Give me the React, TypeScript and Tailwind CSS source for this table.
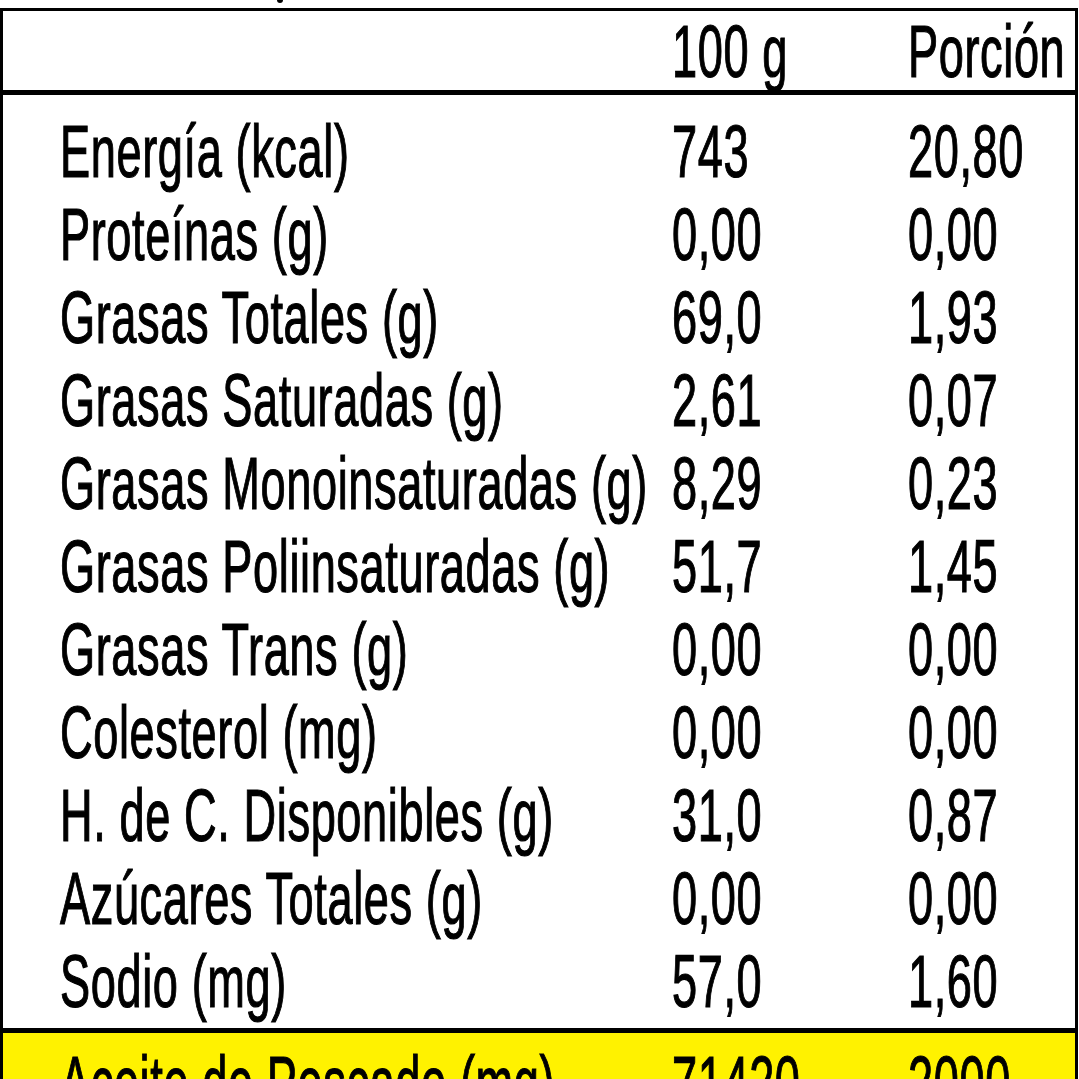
const rows = [
  ["Energía (kcal)", "743", "20,80"],
  ["Proteínas (g)", "0,00", "0,00"],
  ["Grasas Totales (g)", "69,0", "1,93"],
  ["Grasas Saturadas (g)", "2,61", "0,07"],
  ["Grasas Monoinsaturadas (g)", "8,29", "0,23"],
  ["Grasas Poliinsaturadas (g)", "51,7", "1,45"],
  ["Grasas Trans (g)", "0,00", "0,00"],
  ["Colesterol (mg)", "0,00", "0,00"],
  ["H. de C. Disponibles (g)", "31,0", "0,87"],
  ["Azúcares Totales (g)", "0,00", "0,00"],
  ["Sodio (mg)", "57,0", "1,60"],
];

const Txt = ({ children }: { children: React.ReactNode }) => (
  <span className="inline-block origin-left scale-x-[0.61] tracking-[1px] whitespace-nowrap [-webkit-text-stroke:1.2px_black]">
    {children}
  </span>
);

const Row = ({ cells }: { cells: string[] }) => (
  <div className="grid grid-cols-[669px_236px_1fr]">
    <div className="min-w-0 pl-[57px]">
      <Txt>{cells[0]}</Txt>
    </div>
    <div className="min-w-0">
      <Txt>{cells[1]}</Txt>
    </div>
    <div className="min-w-0">
      <Txt>{cells[2]}</Txt>
    </div>
  </div>
);

const App = () => {
  return (
    <div
      className="w-[1079px] h-[1079px] overflow-hidden bg-white text-black text-[74px]"
      style={{ fontFamily: '"Liberation Sans", Arial, sans-serif' }}
    >
      <div className="h-[8px]">
        <div className="ml-[277px] w-[6px] h-[3px] rounded-b-full bg-black"></div>
      </div>
      <div className="w-[1078px] border-x-[3px] border-t-[3px] border-black">
        <div className="h-[79px] leading-[79px] pt-[1px]">
          <Row cells={["", "100 g", "Porción"]} />
        </div>
        <div className="border-t-[5px] border-black pt-[15px] pb-[5px] leading-[83px]">
          {rows.map((r, i) => (
            <Row key={i} cells={r} />
          ))}
        </div>
        <div className="border-t-[5px] border-black bg-[#fff200] pt-[8px] h-[200px] leading-[83px]">
          <Row cells={["Aceite de Pescado (mg)", "71420", "2000"]} />
        </div>
      </div>
    </div>
  );
};

export default App;
